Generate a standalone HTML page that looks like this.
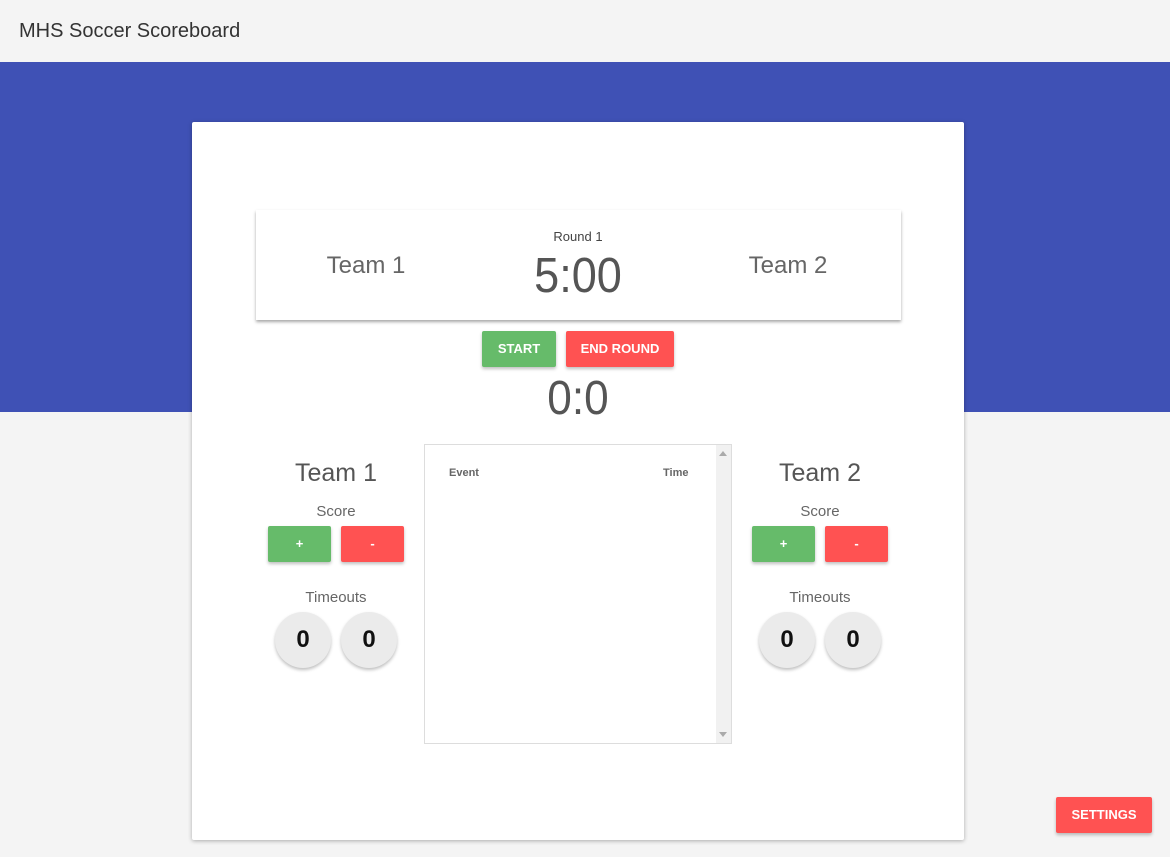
<!DOCTYPE html>
<html><head><style>
*{box-sizing:border-box;margin:0;padding:0}
body{width:1170px;height:857px;background:#f4f4f4;font-family:"Liberation Sans",sans-serif;position:relative;overflow:hidden;color:#444}
.hdr{position:absolute;left:0;top:0;width:1170px;height:62px;background:#f4f4f4}
.hdr span{position:absolute;left:19px;top:20px;font-size:20px;color:#333}
.blue{position:absolute;left:0;top:62px;width:1170px;height:350px;background:#3f51b5}
.card{position:absolute;left:192px;top:122px;width:772px;height:718px;background:#fff;border-radius:2px;box-shadow:0 1px 4px rgba(0,0,0,.3)}
.a{position:absolute}
.sb{left:64px;top:88px;width:645px;height:110px;background:#fff;box-shadow:0 2px 3px rgba(0,0,0,.35)}
.btn{position:absolute;color:#fff;font-weight:bold;font-size:13px;text-align:center;border-radius:2px;box-shadow:0 2px 3px rgba(0,0,0,.25)}
.g{background:#66bb6a}.r{background:#ff5252}
.c{text-align:center;font-weight:300}
.circ{position:absolute;width:56px;height:56px;border-radius:50%;background:#ebebeb;box-shadow:0 2px 3px rgba(0,0,0,.25);font-size:24px;font-weight:bold;color:#111;text-align:center;line-height:56px}
</style></head><body>
<div class="hdr"><span>MHS Soccer Scoreboard</span></div>
<div class="blue"></div>
<div class="card">
 <div class="a sb">
  <div class="a c" style="left:40px;top:42px;width:140px;font-size:24px;color:#666">Team 1</div>
  <div class="a c" style="left:262px;top:19px;width:120px;font-size:13px;color:#444">Round 1</div>
  <div class="a c" style="left:242px;top:38px;width:160px;font-size:49px;color:#555;transform:scaleX(.92)">5:00</div>
  <div class="a c" style="left:462px;top:42px;width:140px;font-size:24px;color:#666">Team 2</div>
 </div>
 <div class="btn g" style="left:290px;top:209px;width:74px;height:36px;line-height:36px">START</div>
 <div class="btn r" style="left:374px;top:209px;width:108px;height:36px;line-height:36px">END ROUND</div>
 <div class="a c" style="left:306px;top:249px;width:160px;font-size:48px;color:#555;transform:scaleX(.92)">0:0</div>

 <div class="a c" style="left:74px;top:337px;width:140px;font-size:25px;color:#555">Team 1</div>
 <div class="a c" style="left:94px;top:381px;width:100px;font-size:15px;color:#666">Score</div>
 <div class="btn g" style="left:76px;top:404px;width:63px;height:36px;line-height:36px">+</div>
 <div class="btn r" style="left:149px;top:404px;width:63px;height:36px;line-height:36px">-</div>
 <div class="a c" style="left:94px;top:467px;width:100px;font-size:15px;color:#666">Timeouts</div>
 <div class="circ" style="left:83px;top:490px">0</div>
 <div class="circ" style="left:149px;top:490px">0</div>

 <div class="a" style="left:232px;top:322px;width:308px;height:300px;border:1px solid #ddd;background:#fff">
  <div class="a" style="right:0;top:0;width:15px;height:298px;background:#f1f1f1"></div>
  <div class="a" style="right:4px;top:6px;width:0;height:0;border-left:4px solid transparent;border-right:4px solid transparent;border-bottom:5px solid #aaa"></div>
  <div class="a" style="right:4px;bottom:6px;width:0;height:0;border-left:4px solid transparent;border-right:4px solid transparent;border-top:5px solid #aaa"></div>
  <div class="a" style="left:24px;top:22px;font-size:11px;font-weight:bold;color:#666">Event</div>
  <div class="a" style="left:238px;top:22px;font-size:11px;font-weight:bold;color:#666">Time</div>
 </div>

 <div class="a c" style="left:558px;top:337px;width:140px;font-size:25px;color:#555">Team 2</div>
 <div class="a c" style="left:578px;top:381px;width:100px;font-size:15px;color:#666">Score</div>
 <div class="btn g" style="left:560px;top:404px;width:63px;height:36px;line-height:36px">+</div>
 <div class="btn r" style="left:633px;top:404px;width:63px;height:36px;line-height:36px">-</div>
 <div class="a c" style="left:578px;top:467px;width:100px;font-size:15px;color:#666">Timeouts</div>
 <div class="circ" style="left:567px;top:490px">0</div>
 <div class="circ" style="left:633px;top:490px">0</div>
</div>
<div class="btn r" style="left:1056px;top:797px;width:96px;height:36px;line-height:36px">SETTINGS</div>
</body></html>
